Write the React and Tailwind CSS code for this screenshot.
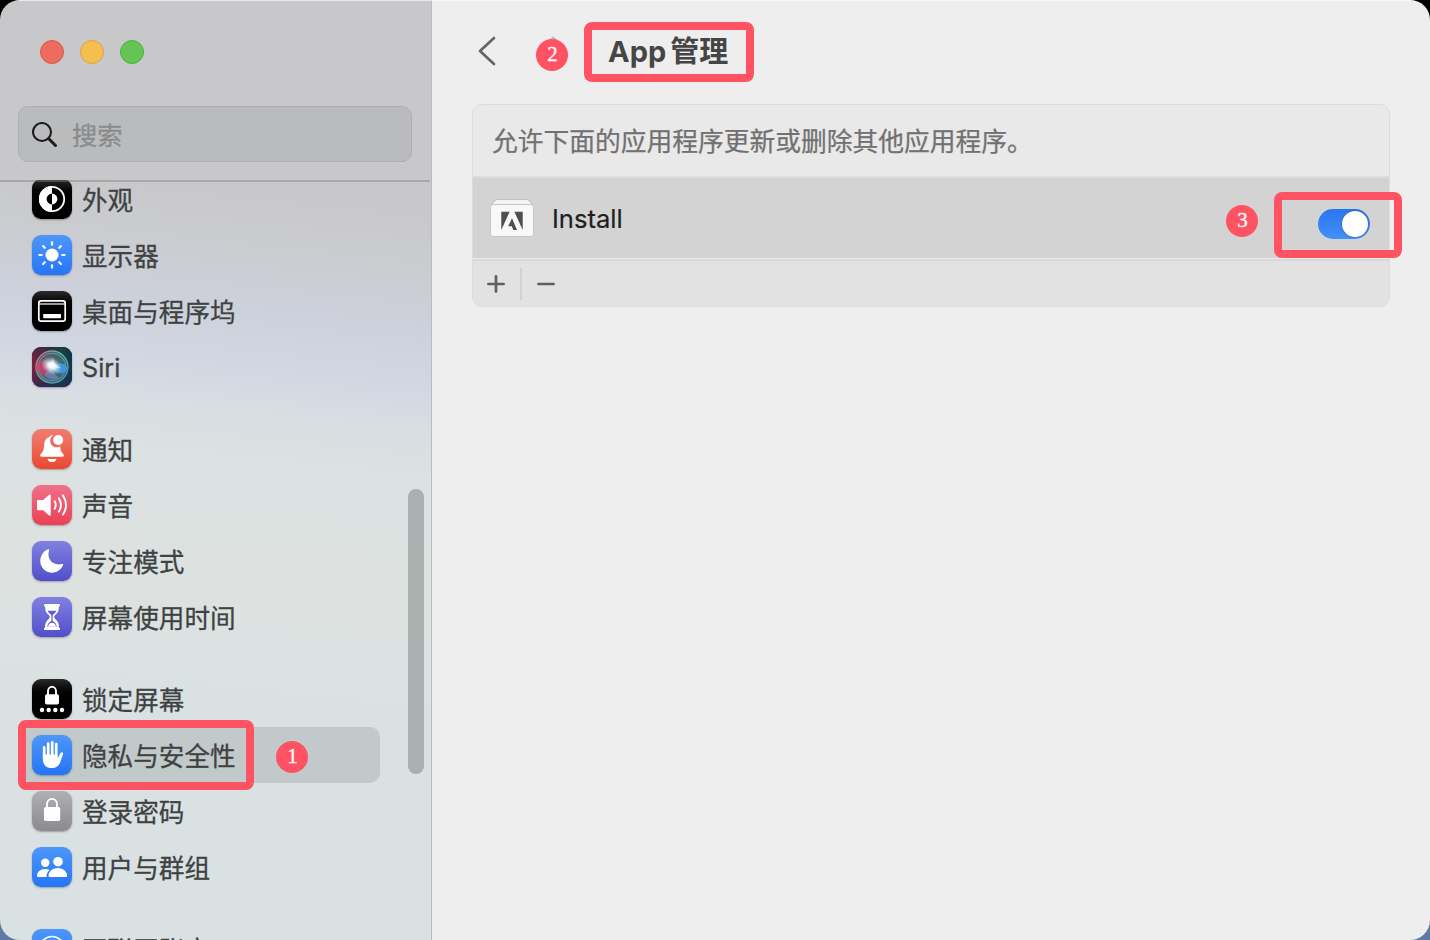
import React from "react";

const Appearance = () => (
  <>
    <circle cx="20" cy="20" r="12.2" fill="none" stroke="#fff" strokeWidth="1.8" />
    <path d="M20 7a13 13 0 0 0 0 26v-7.600a5.400 5.400 0 0 1 0-10.800z" fill="#fff" />
    <path d="M20 14.600a5.400 5.400 0 0 1 0 10.800z" fill="#fff" />
  </>
);

const Display = () => (
  <>
    <circle cx="20" cy="20" r="6.500" fill="#fff" />
    <g stroke="#fff" strokeWidth="2.200" strokeLinecap="round">
      {[0, 45, 90, 135, 180, 225, 270, 315].map((a) => (
        <path key={a} d="M20 7.400v2.300" transform={`rotate(${a} 20 20)`} />
      ))}
    </g>
  </>
);

const Dock = () => (
  <>
    <rect x="6.800" y="9.800" width="26.400" height="20.400" rx="2.400" fill="none" stroke="#fff" strokeWidth="1.700" />
    <path d="M7 13h26" stroke="#fff" strokeWidth="1.200" />
    <rect x="11.200" y="23" width="17.800" height="4.200" rx="0.600" fill="#fff" />
  </>
);

const Siri = () => (
  <>
    <defs>
      <linearGradient id="siriBg" x1="0" y1="0" x2="1" y2="0">
        <stop offset="0" stopColor="#86203f" />
        <stop offset="0.45" stopColor="#34304a" />
        <stop offset="0.75" stopColor="#174a4c" />
        <stop offset="1" stopColor="#12344e" />
      </linearGradient>
      <linearGradient id="siriShade" x1="0" y1="0" x2="0" y2="1">
        <stop offset="0" stopColor="#1c2f33" stopOpacity="0.4" />
        <stop offset="0.5" stopColor="#1a2342" stopOpacity="0" />
        <stop offset="1" stopColor="#1d2858" stopOpacity="0.65" />
      </linearGradient>
      <radialGradient id="siriGlow">
        <stop offset="0" stopColor="#fff" />
        <stop offset="0.35" stopColor="#f4fcff" stopOpacity="0.9" />
        <stop offset="1" stopColor="#b5dfe6" stopOpacity="0" />
      </radialGradient>
      <linearGradient id="siriRing" x1="0" y1="0" x2="1" y2="1">
        <stop offset="0" stopColor="#c66a86" />
        <stop offset="0.4" stopColor="#5fb59a" />
        <stop offset="1" stopColor="#4b8fd0" />
      </linearGradient>
    </defs>
    <rect width="40" height="40" rx="9" fill="url(#siriBg)" />
    <rect width="40" height="40" rx="9" fill="url(#siriShade)" />
    <circle cx="20" cy="20" r="16" fill="#6f9a9c" fillOpacity="0.45" stroke="url(#siriRing)" strokeWidth="1.300" />
    <circle cx="20" cy="20" r="13.800" fill="none" stroke="url(#siriRing)" strokeWidth="0.900" />
    <ellipse cx="11.500" cy="20.500" rx="7.500" ry="7" fill="#dc3f70" fillOpacity="0.7" />
    <ellipse cx="28.500" cy="21.500" rx="6.500" ry="5" fill="#3f9ff0" fillOpacity="0.8" />
    <path d="M18 21 27 31.500q-9 3-15-3.500z" fill="#7d8fc4" fillOpacity="0.6" />
    <ellipse cx="19.500" cy="19" rx="11" ry="8.500" fill="url(#siriGlow)" transform="rotate(30 20 19)" />
    <path d="M21 10.500q.3 6.500 7.500 10.500-6.500.5-12-3.500 3.500-2 4.500-7z" fill="#fff" fillOpacity="0.55" />
  </>
);

const Bell = () => (
  <>
    <path
      fill="#fff"
      d="M20.900 6.400c-.8-.4-1.900-.3-2.600.3-.5.4-.7.900-1 1.300-3.300 1-5 3.900-5.200 7.900-.3 5.100-.9 6.500-3.300 9-.9 1-.9 2.900.8 2.900h20.800c1.700 0 1.700-1.900.8-2.900-1.900-2-2.700-3.600-3-7.700a6.100 6.100 0 0 1-7.300-10.800z"
    />
    <circle cx="26.200" cy="11" r="5" fill="#fff" />
    <path d="M15.600 29.900h8.800a4.500 4 0 0 1-8.800 0z" fill="#fff" />
  </>
);

const Sound = () => (
  <>
    <path
      fill="#fff"
      d="M6.300 15h4.900l5.900-5.200c.7-.6 1.600-.3 1.600.7v19.200c0 1-.9 1.300-1.600.7L11.200 25.300H6.300c-.8 0-1.300-.5-1.300-1.300v-7.700c0-.8.5-1.300 1.300-1.300z"
    />
    <g fill="none" stroke="#fff" strokeWidth="1.900" strokeLinecap="round">
      <path d="M22.700 16.300q2.200 3.700 0 7.400" />
      <path d="M26.900 13.400q4 6.600 0 13.200" />
      <path d="M31 10.400q6 9.600 0 19.200" />
    </g>
  </>
);

const Moon = () => (
  <path fill="#fff" d="M16.300 8.300c.6-.2 1 .2.800.8C14.600 17 19.400 25 29.800 23.100c1-.2 1.700.1 1.300 1C29 28.800 25 31.700 20.200 31.700 13.400 31.700 8.300 26.600 8.300 20c0-5.200 3.100-9.900 8-11.700z" />
);

const Hourglass = () => (
  <>
    <path
      fill="#fff"
      d="M13.200 7h13.600c1.700 0 1.700 2.500.1 2.600 0 4.600-1.300 6.400-3.700 8.500-1.400 1.200-1.400 2.600 0 3.800 2.400 2.100 3.700 3.900 3.700 8.500 1.600.1 1.600 2.600-.1 2.600H13.200c-1.700 0-1.700-2.500-.1-2.600 0-4.600 1.300-6.400 3.700-8.500 1.400-1.200 1.400-2.600 0-3.800-2.400-2.100-3.700-3.900-3.700-8.500C11.500 9.500 11.500 7 13.200 7z"
    />
    <path
      fill="#5f5cd0"
      d="M15.600 13.700h8.800c-.8 1.700-1.700 2.500-2.700 3.400-.9.800-1.100 1.500-1.100 2.400v3.400c0 .8.300 1.100.9 1.500 1.800 1.100 2.900 2.700 3.300 5.300h-9.600c.4-2.600 1.500-4.200 3.300-5.300.6-.4.900-.7.900-1.500v-3.400c0-.9-.2-1.600-1.100-2.400-1-.9-1.900-1.700-2.700-3.400z"
    />
    <path fill="#fff" d="M20 25.800c2 0 3.400 1.500 3.900 3.100.1.400 0 .8-.5.800h-6.800c-.5 0-.6-.4-.5-.8.500-1.600 1.900-3.100 3.900-3.100z" />
  </>
);

const LockScreen = () => (
  <>
    <path d="M16 16v-3.900a4 4.300 0 0 1 8 0V16" fill="none" stroke="#fff" strokeWidth="1.900" />
    <rect x="13" y="15.200" width="14" height="10.200" rx="1.700" fill="#fff" />
    {[10, 16.700, 23.300, 30].map((x) => (
      <circle key={x} cx={x} cy="31" r="2.200" fill="#fff" />
    ))}
  </>
);

const Hand = () => (
  <>
    <g stroke="#fff" strokeWidth="2.700" strokeLinecap="round" fill="none">
      <path d="M12.200 12.400V23M16.200 8.500V21M20.200 7.300V21M24.200 9.100V21" />
    </g>
    <path
      fill="#fff"
      d="M10.850 19.500h14.700v3.300c1.300-.9 1.800-2.200 2.500-4 .4-1.100 1.200-1.900 2.100-1.600.9.300 1.100 1 .8 2.200L28.700 26c-1.300 4.600-4.400 7.100-9 7.100-5.500 0-8.850-3.500-8.850-9.300z"
    />
  </>
);

const Lock = () => (
  <>
    <path d="M15 17v-3.900a5 5.300 0 0 1 10 0V17" fill="none" stroke="#fff" strokeWidth="1.800" />
    <rect x="12" y="16" width="16.200" height="14" rx="1.800" fill="#fff" />
  </>
);

const Users = () => (
  <>
    <circle cx="13.200" cy="15.800" r="4.200" fill="#fff" />
    <circle cx="26" cy="14.700" r="4.800" fill="#fff" />
    <path fill="#fff" d="M6.500 30C5.500 30 5 29.600 5 28.700 5 25.300 8.300 22 13.200 22c1.700 0 3.200.4 4.400 1.100-2.200 1.800-3.600 4.400-2.800 6.900z" />
    <path fill="#fff" d="M18.200 30c-1.200 0-1.700-.4-1.700-1.300 0-3.500 3.700-7.700 9.300-7.700s9.300 4.200 9.300 7.700c0 .9-.5 1.300-1.700 1.300z" />
  </>
);

const Globe = () => (
  <g fill="none" stroke="#fff" strokeWidth="1.700">
    <circle cx="20" cy="20" r="12.500" />
    <path d="M10 13.500q10 4 20 0" />
  </g>
);

const BLACK = "bg-gradient-to-b from-[#2b2b2b] via-[#000000] via-50% to-[#000000]";
const BLUE = "bg-gradient-to-b from-[#4d97f8] to-[#2674f8]";
const INDIGO = "bg-gradient-to-b from-[#8280e0] to-[#524fcb]";

const groups = [
  [
    { label: "外观", icon: Appearance, tone: BLACK },
    { label: "显示器", icon: Display, tone: BLUE },
    { label: "桌面与程序坞", icon: Dock, tone: BLACK },
    { label: "Siri", icon: Siri, tone: "bg-[#222a3c]", latin: true },
  ],
  [
    { label: "通知", icon: Bell, tone: "bg-gradient-to-b from-[#f07c70] to-[#ea4830]" },
    { label: "声音", icon: Sound, tone: "bg-gradient-to-b from-[#f0708a] to-[#ea3f54]" },
    { label: "专注模式", icon: Moon, tone: INDIGO },
    { label: "屏幕使用时间", icon: Hourglass, tone: INDIGO },
  ],
  [
    { label: "锁定屏幕", icon: LockScreen, tone: BLACK },
    { label: "隐私与安全性", icon: Hand, tone: BLUE, selected: true },
    { label: "登录密码", icon: Lock, tone: "bg-gradient-to-b from-[#b0b0b4] to-[#8b8a8f]" },
    { label: "用户与群组", icon: Users, tone: BLUE },
  ],
  [{ label: "互联网账户", icon: Globe, tone: BLUE }],
];

function SidebarRow({ label, icon: Icon, tone, selected, latin }) {
  return (
    <div className={`flex h-14 shrink-0 items-center rounded-[10px] pl-3 ${selected ? "relative bg-[#c2c9ca]" : ""}`}>
      <div className={`size-10 shrink-0 rounded-[9px] shadow-[0_1px_2px_rgba(0,0,0,0.3)] ${tone}`}>
        <svg viewBox="0 0 40 40" className="size-10">
          <Icon />
        </svg>
      </div>
      <span
        className={`ml-[10px] whitespace-nowrap leading-9 text-[#3f4242] [-webkit-text-stroke:0.3px_#3f4242] ${
          latin ? "pt-0.5 text-[25.200px]" : "pt-1 text-[25.600px]"
        }`}
      >
        {label}
      </span>
      {selected && (
        <>
          <div className="absolute top-[-7px] left-[-2px] h-[70px] w-[236px] rounded-lg border-8 border-[#ff5364]" />
          <Badge className="absolute top-[14px] left-[256.400px]">1</Badge>
        </>
      )}
    </div>
  );
}

function Badge({ className, children }) {
  return (
    <div
      className={`flex size-8 items-center justify-center rounded-full bg-[#ff5364] pb-px font-['Liberation_Serif',serif] text-[21px] leading-none text-white [-webkit-text-stroke:0.3px_white] ${className}`}
    >
      {children}
    </div>
  );
}

function Sidebar() {
  return (
    <aside className="flex w-[432px] shrink-0 flex-col border-r border-[#b9bcbd] bg-[linear-gradient(186deg,#c8c7c9_0%,#c8c8ca_21%,#cbccd0_27%,#cdd1dc_34%,#d1d7e2_39%,#d8dee2_44%,#dce1e1_49%,#dde2e1_64%,#d9e1e2_76%,#d9e1e2_100%)]">
      <div className="flex h-[180px] shrink-0 flex-col px-[18px] pt-10">
        <div className="flex gap-4 pl-[22px]">
          <div className="size-6 rounded-full border border-[#d9594d] bg-[#ee6c5e]" />
          <div className="size-6 rounded-full border border-[#dba33d] bg-[#f5bf4f]" />
          <div className="size-6 rounded-full border border-[#4fae43] bg-[#62c554]" />
        </div>
        <div className="mt-[42px] flex h-14 w-[394px] items-center rounded-[10px] border border-[#adaeaf] bg-[#babbbc] pl-[13px]">
          <svg viewBox="0 0 26 26" className="mt-0.5 size-[26px]" fill="none" stroke="#1c1c1d" strokeLinecap="round">
            <circle cx="10" cy="10" r="9" strokeWidth="2.100" />
            <path d="M16.800 16.800 23.500 23.500" strokeWidth="3" />
          </svg>
          <span className="ml-[14px] pt-1 text-[25.200px] leading-9 text-[#8a8b8c] [-webkit-text-stroke:0.3px_#8a8b8c]">搜索</span>
        </div>
      </div>
      <div className="relative flex min-h-0 flex-1 overflow-hidden">
        <div className="-mt-[9px] ml-5 flex w-[360px] shrink-0 flex-col gap-[26px]">
          {groups.map((rows, i) => (
            <nav key={i} className="flex flex-col">
              {rows.map((row) => (
                <SidebarRow key={row.label} {...row} />
              ))}
            </nav>
          ))}
        </div>
        <div className="mt-[309px] ml-7 h-[285px] w-4 rounded-full bg-[#aab0b0]" />
        <div className="absolute left-0 right-px top-0 h-0.5 bg-[#7f8183]/45" />
      </div>
    </aside>
  );
}

function InstallerIcon() {
  return (
    <svg viewBox="0 0 46 42" className="h-[42px] w-[46px]">
      <path d="M7.500 2.500h31l5.500 5.500H2z" fill="#f4f4f4" stroke="#bdbdbd" strokeWidth="0.900" />
      <rect x="1.500" y="7.500" width="43" height="32" rx="2.800" fill="#f8f8f8" stroke="#c2c2c2" strokeWidth="0.900" />
      <path d="M12.300 14.700h8.300l-8.300 18.300zM33.700 14.700h-8.300l8.300 18.300zM23 21.300 28 33h-3.700l-1.500-3.700h-3.600z" fill="#4e4e4e" />
    </svg>
  );
}

function Detail() {
  return (
    <main className="flex min-w-0 flex-1 flex-col bg-[#eeeeee] px-10">
      <header className="flex h-[104px] shrink-0 items-start pl-[6px]">
        <svg viewBox="0 0 18 30" className="mt-9 h-[30px] w-[18px]" fill="none" stroke="#656565" strokeWidth="2.700" strokeLinecap="round" strokeLinejoin="round">
          <path d="M16 2 2 15l14 13" />
        </svg>
        <div className="relative mt-[39px] ml-[40.400px] size-8">
          <svg viewBox="0 0 10 6" className="absolute -top-[3px] left-3 h-[6px] w-[10px]" fill="none" stroke="#bcbcbc" strokeWidth="2">
            <path d="M1 5 5 1.500 9 5" />
          </svg>
          <Badge className="relative">2</Badge>
        </div>
        <h1 className="mt-[22px] ml-[15.600px] flex h-[60px] w-[170px] items-center rounded-lg border-8 border-[#ff5364] pb-px pl-4 text-[29px] leading-none font-bold whitespace-nowrap text-[#454545]">
          App<span className="ml-1">管理</span>
        </h1>
      </header>
      <section className="flex h-[203px] w-[918px] shrink-0 flex-col rounded-[10px] border border-[#dcdcdc] bg-[#e9e9e9]">
        <p className="flex h-[71px] items-center pt-0.5 pl-[19px] text-[25.750px] leading-none text-[#717171] [-webkit-text-stroke:0.25px_#717171]">
          允许下面的应用程序更新或删除其他应用程序。
        </p>
        <div className="relative flex h-[82px] items-center border-t-2 border-[#dcdcdc] bg-[#d3d3d3] pl-4">
          <InstallerIcon />
          <span className="ml-[17px] pt-0.5 text-[25.600px] leading-none text-[#1f1f1f] [-webkit-text-stroke:0.2px_#1f1f1f]">Install</span>
          <Badge className="absolute top-[27px] left-[753.400px]">3</Badge>
          <div className="absolute top-[31px] left-[845px] flex h-[30px] w-[52px] items-center justify-end rounded-full bg-gradient-to-b from-[#2b74f0] to-[#4490f8] pr-[2px]">
            <div className="size-[26px] rounded-full bg-white shadow-[0_0_2px_rgba(0,0,0,0.35)]" />
          </div>
          <div className="absolute top-[14px] left-[801px] z-10 h-[66px] w-[128px] rounded-lg border-8 border-[#ff5364]" />
        </div>
        <div className="h-px bg-[#ececec]" />
        <div className="flex flex-1 items-center rounded-b-[9px] border-t-2 border-[#d8d8d8] bg-[#e2e2e2] pl-[14px]">
          <svg viewBox="0 0 18 18" className="size-[18px]" stroke="#5f5f5f" strokeWidth="2.700" strokeLinecap="round">
            <path d="M1.400 9h15.200M9 1.400v15.200" />
          </svg>
          <div className="ml-[15px] h-8 w-0.5 bg-[#d2d2d2]" />
          <svg viewBox="0 0 18 18" className="ml-[15px] size-[18px]" stroke="#5f5f5f" strokeWidth="2.700" strokeLinecap="round">
            <path d="M1.400 9h15.200" />
          </svg>
        </div>
      </section>
    </main>
  );
}

export default function App() {
  return (
    <div className="h-[940px] w-[1430px] overflow-hidden bg-gradient-to-b from-black from-50% to-[#5c7ba3] to-50% font-['Inter','Noto_Sans_CJK_SC',sans-serif]">
      <div className="relative flex h-full w-full overflow-hidden rounded-[20px]">
        <Sidebar />
        <Detail />
        <div className="absolute inset-x-0 top-0 h-px bg-white/60" />
      </div>
    </div>
  );
}
